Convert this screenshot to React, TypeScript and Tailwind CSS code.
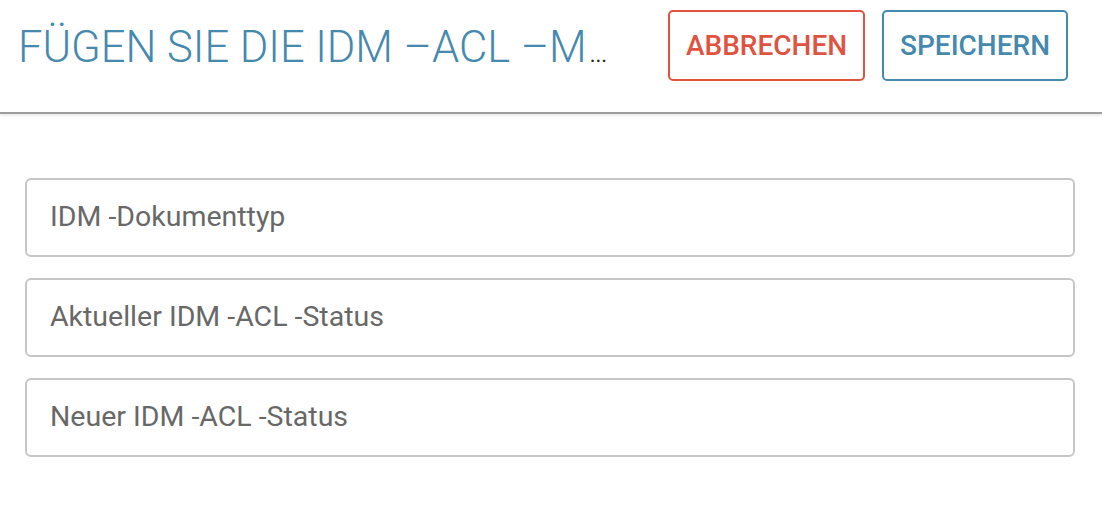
export default function App() {
  const fields = ["IDM -Dokumenttyp", "Aktueller IDM -ACL -Status", "Neuer IDM -ACL -Status"];

  return (
    <div className="w-[1102px] h-[526px] bg-white font-['Roboto',sans-serif] overflow-hidden">
      {/* Header */}
      <div className="h-[114px] flex flex-row items-start border-b-2 border-[#9e9e9e] shadow-[0_2px_2px_rgba(0,0,0,0.08)]">
        <h1 className="pl-[18px] pt-[23px] text-[43.5px] leading-[50px] font-light text-[#4589ae] whitespace-nowrap flex items-baseline w-[640px]">
          FÜGEN SIE DIE IDM –ACL –M
          <span className="text-[#222] text-[22px] font-normal pl-[3px]">...</span>
        </h1>
        <div className="flex flex-row gap-[17px] pt-[10px] pl-[28px]">
          <button className="w-[197px] h-[71px] rounded-[5px] border-2 border-[#e0533f] text-[#e0533f] text-[28px] font-medium">
            ABBRECHEN
          </button>
          <button className="w-[186px] h-[71px] rounded-[5px] border-2 border-[#4589ae] text-[#4589ae] text-[28px] font-medium">
            SPEICHERN
          </button>
        </div>
      </div>

      {/* Form */}
      <div className="pt-[64px] pl-[25px] pr-[27px] flex flex-col gap-[21px]">
        {fields.map((f) => (
          <div key={f} className="h-[79px] rounded-[6px] border-2 border-[#c6c6c6] flex items-center pl-[23px]">
            <span className="text-[28.5px] text-[#686868]">{f}</span>
          </div>
        ))}
      </div>
    </div>
  );
}
